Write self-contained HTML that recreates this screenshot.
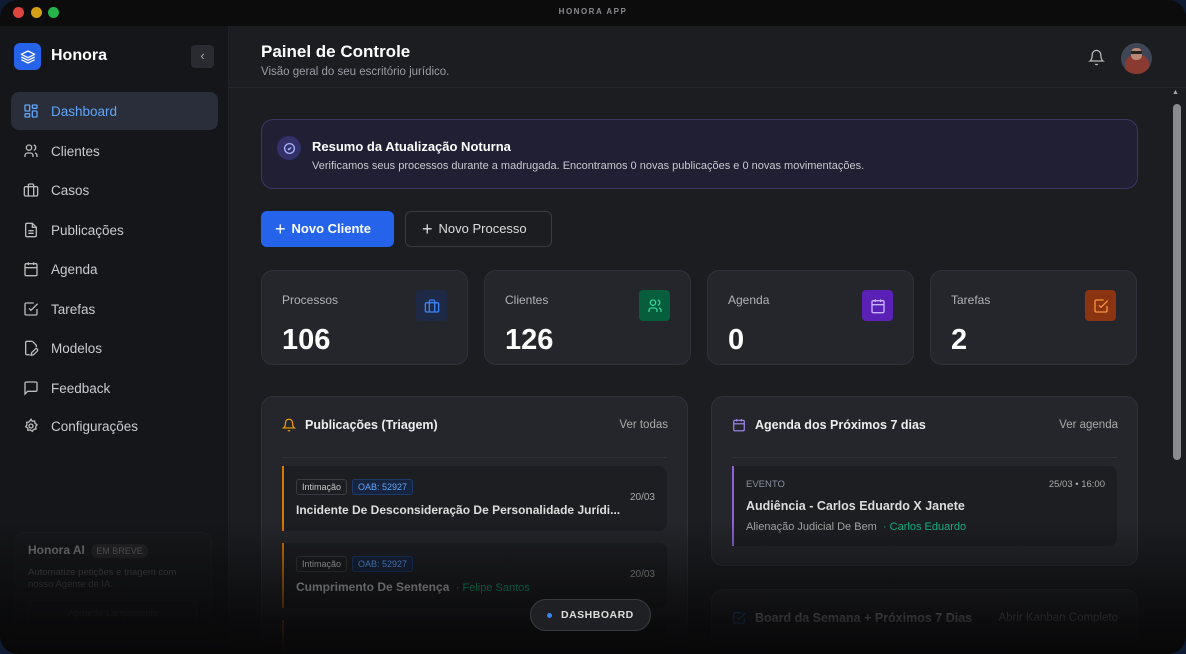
<!DOCTYPE html>
<html><head><meta charset="utf-8">
<style>
*{box-sizing:border-box;margin:0;padding:0}
html,body{width:1186px;height:654px;overflow:hidden;background:#0f1a33;font-family:"Liberation Sans",sans-serif;color:#e5e7eb}
.win{position:absolute;left:0;top:0;width:1186px;height:654px;border-radius:18px;overflow:hidden;background:#1c1d21}
.title{position:absolute;left:0;top:0;right:0;height:26px;background:#0c0c0d;text-align:center;font-size:8px;letter-spacing:1.5px;color:#8a8a8f;line-height:24px;font-weight:bold}
.dot{position:absolute;top:7px;width:11px;height:11px;border-radius:50%}
.side{position:absolute;left:0;top:26px;width:229px;bottom:0;background:#151619;border-right:1px solid #202126}
.logo{position:absolute;left:14px;top:17px;width:27px;height:27px;border-radius:6px;background:#2563eb;display:flex;align-items:center;justify-content:center}
.brand{position:absolute;left:51px;top:21px;font-size:16px;font-weight:bold;color:#fff}
.coll{position:absolute;left:191px;top:19px;width:23px;height:23px;border-radius:4px;background:#2a2b30;color:#aaa;font-size:13px;text-align:center;line-height:22px}
.nav{position:absolute;left:11px;width:207px;height:38px;border-radius:8px;display:flex;align-items:center;padding-left:12px;font-size:13.5px;color:#c9cbd0}
.nav svg{margin-right:12px}
.nav.act{background:#2a2e3a;color:#60a5fa}
.ai{position:absolute;left:14px;top:506px;width:198px;height:120px;border-radius:10px;background:#1a1b1e;border:1px solid #222;padding:10px 13px;opacity:.5}
.main{position:absolute;left:229px;top:26px;right:0;bottom:0}
.hdr{position:absolute;left:0;right:0;top:0;height:62px;border-bottom:1px solid #26272c}
h1{position:absolute;left:32px;top:16px;font-size:17px;color:#fff}
.sub{position:absolute;left:32px;top:40px;font-size:11.5px;color:#9a9ca3}
.card{position:absolute;background:#25262b;border:1px solid #30313a;border-radius:12px}
.stat .lb{position:absolute;left:20px;top:22px;font-size:12px;color:#b0b2b8}
.stat .num{position:absolute;left:20px;top:53px;font-size:29px;font-weight:bold;color:#fff}
.stat .ic{position:absolute;right:20px;top:19px;width:31px;height:31px;border-radius:4px;display:flex;align-items:center;justify-content:center}
.pub{position:absolute;left:20px;right:20px;height:65px;background:#1d1e22;border-left:2px solid #d97706;border-radius:0 8px 8px 0}
.tag{display:inline-block;font-size:9px;padding:2px 5px;border-radius:3px;border:1px solid #3a3b40;color:#c5c5c5;margin-right:5px}
.tag.b{border-color:#1e3a6a;background:#16243f;color:#60a5fa}
.fade{position:absolute;left:0;right:0;top:520px;bottom:0;background:linear-gradient(to bottom,rgba(8,8,9,0),rgba(8,8,9,.85) 75%,#080809);pointer-events:none}
</style></head><body>
<div class="win">
<div class="title">HONORA APP
<span class="dot" style="left:13px;background:#e0443e"></span><span class="dot" style="left:31px;background:#d4a017"></span><span class="dot" style="left:48px;background:#26b34a"></span></div>

<div class="side">
<div class="logo"><svg width="16" height="16" viewBox="0 0 24 24" fill="none" stroke="#fff" stroke-width="2" stroke-linejoin="round"><path d="M12 3 2 8l10 5 10-5z"/><path d="M2 12l10 5 10-5"/><path d="M2 16l10 5 10-5"/></svg></div>
<div class="brand">Honora</div>
<div class="coll">‹</div>
<div class="nav act" style="top:66px"><svg width="16" height="16" viewBox="0 0 24 24" fill="none" stroke="#60a5fa" stroke-width="2"><rect x="3" y="3" width="7" height="9" rx="1"/><rect x="14" y="3" width="7" height="5" rx="1"/><rect x="14" y="12" width="7" height="9" rx="1"/><rect x="3" y="16" width="7" height="5" rx="1"/></svg>Dashboard</div>
<div class="nav" style="top:106px"><svg width="16" height="16" viewBox="0 0 24 24" fill="none" stroke="#bbb" stroke-width="2"><circle cx="9" cy="7" r="4"/><path d="M3 21v-2a4 4 0 0 1 4-4h4a4 4 0 0 1 4 4v2M16 3.1a4 4 0 0 1 0 7.8M21 21v-2a4 4 0 0 0-3-3.9"/></svg>Clientes</div>
<div class="nav" style="top:145px"><svg width="16" height="16" viewBox="0 0 24 24" fill="none" stroke="#bbb" stroke-width="2"><rect x="2" y="7" width="20" height="14" rx="2"/><path d="M16 21V5a2 2 0 0 0-2-2h-4a2 2 0 0 0-2 2v16"/></svg>Casos</div>
<div class="nav" style="top:185px"><svg width="16" height="16" viewBox="0 0 24 24" fill="none" stroke="#bbb" stroke-width="2"><path d="M14 2H6a2 2 0 0 0-2 2v16a2 2 0 0 0 2 2h12a2 2 0 0 0 2-2V8z"/><path d="M14 2v6h6M16 13H8M16 17H8"/></svg>Publicações</div>
<div class="nav" style="top:224px"><svg width="16" height="16" viewBox="0 0 24 24" fill="none" stroke="#bbb" stroke-width="2"><rect x="3" y="4" width="18" height="18" rx="2"/><path d="M16 2v4M8 2v4M3 10h18"/></svg>Agenda</div>
<div class="nav" style="top:264px"><svg width="16" height="16" viewBox="0 0 24 24" fill="none" stroke="#bbb" stroke-width="2"><path d="M9 11l3 3L22 4"/><path d="M21 12v7a2 2 0 0 1-2 2H5a2 2 0 0 1-2-2V5a2 2 0 0 1 2-2h11"/></svg>Tarefas</div>
<div class="nav" style="top:303px"><svg width="16" height="16" viewBox="0 0 24 24" fill="none" stroke="#bbb" stroke-width="2"><path d="M14 2H6a2 2 0 0 0-2 2v16a2 2 0 0 0 2 2h4M14 2l6 6v3"/><path d="M18.4 13.6a2 2 0 0 1 3 3L16 22l-4 1 1-4z"/></svg>Modelos</div>
<div class="nav" style="top:343px"><svg width="16" height="16" viewBox="0 0 24 24" fill="none" stroke="#bbb" stroke-width="2"><path d="M21 15a2 2 0 0 1-2 2H7l-4 4V5a2 2 0 0 1 2-2h14a2 2 0 0 1 2 2z"/></svg>Feedback</div>
<div class="nav" style="top:381px"><svg width="16" height="16" viewBox="0 0 24 24" fill="none" stroke="#bbb" stroke-width="2"><circle cx="12" cy="12" r="3"/><path d="M12 2l2 3 3.5-.5.5 3.5 3 2-2 3 .5 3.5-3.5.5-2 3-3-2-3.5.5-.5-3.5-3-2 2-3-.5-3.5 3.5-.5z"/></svg>Configurações</div>
<div class="ai"><div style="font-size:12px;font-weight:bold;color:#ddd">Honora AI <span style="font-size:9px;font-weight:normal;background:#333;border-radius:8px;padding:2px 5px;color:#aaa;margin-left:3px">EM BREVE</span></div>
<div style="font-size:9.5px;color:#888;margin-top:10px;line-height:12px">Automatize petições e triagem com nosso Agente de IA.</div>
<div style="margin-top:9px;height:27px;border:1px solid #2a2a2e;border-radius:6px;background:#1f1f22;text-align:center;font-size:9.5px;color:#666;line-height:26px">Aguarde Lançamento</div></div>
</div>

<div class="main">
<div class="hdr"><h1>Painel de Controle</h1><div class="sub">Visão geral do seu escritório jurídico.</div>
<svg style="position:absolute;left:859px;top:23px" width="17" height="17" viewBox="0 0 24 24" fill="none" stroke="#bbb" stroke-width="1.8"><path d="M6 8a6 6 0 0 1 12 0c0 7 3 9 3 9H3s3-2 3-9M10.3 21a1.9 1.9 0 0 0 3.4 0"/></svg>
<div style="position:absolute;left:892px;top:17px;width:31px;height:31px;border-radius:50%;overflow:hidden;background:#3f4656"><div style="position:absolute;left:4px;top:12px;width:24px;height:22px;border-radius:40%;background:#8b3a32"></div><div style="position:absolute;left:10px;top:5px;width:11px;height:12px;border-radius:40%;background:#b98773"></div><div style="position:absolute;left:10px;top:8px;width:11px;height:3px;background:#222"></div></div></div>

<div style="position:absolute;right:5px;top:63px;width:9px;height:10px;color:#aaa;font-size:7px">▲</div>
<div style="position:absolute;right:5px;top:78px;width:8px;height:356px;border-radius:4px;background:#8a8a8f"></div>

<div class="card" style="left:32px;top:93px;width:877px;height:70px;background:#211f33;border-color:#3a3760">
<div style="position:absolute;left:15px;top:16px;width:24px;height:24px;border-radius:50%;background:#34316a;display:flex;align-items:center;justify-content:center"><svg width="13" height="13" viewBox="0 0 24 24" fill="none" stroke="#a5b4fc" stroke-width="2.5"><circle cx="12" cy="12" r="9"/><path d="M9 12l2 2 4-4"/></svg></div>
<div style="position:absolute;left:50px;top:19px;font-size:13px;font-weight:bold;color:#fff">Resumo da Atualização Noturna</div>
<div style="position:absolute;left:50px;top:40px;font-size:11px;color:#c8c8d0">Verificamos seus processos durante a madrugada. Encontramos 0 novas publicações e 0 novas movimentações.</div></div>

<div style="position:absolute;left:32px;top:185px;width:133px;height:36px;border-radius:6px;background:#2563eb;color:#fff;font-size:13px;font-weight:bold;line-height:36px;padding-left:14px"><span style="font-size:18px;font-weight:normal;vertical-align:-2px;margin-right:6px">+</span>Novo Cliente</div>
<div style="position:absolute;left:176px;top:185px;width:147px;height:36px;border-radius:6px;background:#1c1d21;border:1px solid #3a3b40;color:#ddd;font-size:13px;line-height:34px;padding-left:16px"><span style="font-size:18px;vertical-align:-2px;margin-right:6px">+</span>Novo Processo</div>

<div class="card stat" style="left:32px;top:244px;width:207px;height:95px"><div class="lb">Processos</div><div class="num">106</div><div class="ic" style="background:#1e2a45"><svg width="16" height="16" viewBox="0 0 24 24" fill="none" stroke="#3b82f6" stroke-width="2"><rect x="2" y="7" width="20" height="14" rx="2"/><path d="M16 21V5a2 2 0 0 0-2-2h-4a2 2 0 0 0-2 2v16"/></svg></div></div>
<div class="card stat" style="left:255px;top:244px;width:207px;height:95px"><div class="lb">Clientes</div><div class="num">126</div><div class="ic" style="background:#075e3c"><svg width="16" height="16" viewBox="0 0 24 24" fill="none" stroke="#34d399" stroke-width="2"><circle cx="9" cy="7" r="4"/><path d="M3 21v-2a4 4 0 0 1 4-4h4a4 4 0 0 1 4 4v2M16 3.1a4 4 0 0 1 0 7.8M21 21v-2a4 4 0 0 0-3-3.9"/></svg></div></div>
<div class="card stat" style="left:478px;top:244px;width:207px;height:95px"><div class="lb">Agenda</div><div class="num">0</div><div class="ic" style="background:#5b21b6"><svg width="16" height="16" viewBox="0 0 24 24" fill="none" stroke="#c4b5fd" stroke-width="2"><rect x="3" y="4" width="18" height="18" rx="2"/><path d="M16 2v4M8 2v4M3 10h18"/></svg></div></div>
<div class="card stat" style="left:701px;top:244px;width:207px;height:95px"><div class="lb">Tarefas</div><div class="num">2</div><div class="ic" style="background:#8a3412"><svg width="16" height="16" viewBox="0 0 24 24" fill="none" stroke="#fb923c" stroke-width="2"><path d="M9 11l3 3L22 4"/><path d="M21 12v7a2 2 0 0 1-2 2H5a2 2 0 0 1-2-2V5a2 2 0 0 1 2-2h11"/></svg></div></div>

<div class="card" style="left:32px;top:370px;width:427px;height:300px">
<svg style="position:absolute;left:20px;top:21px" width="14" height="14" viewBox="0 0 24 24" fill="none" stroke="#f59e0b" stroke-width="2"><path d="M6 8a6 6 0 0 1 12 0c0 7 3 9 3 9H3s3-2 3-9M10.3 21a1.9 1.9 0 0 0 3.4 0"/></svg>
<div style="position:absolute;left:43px;top:21px;font-size:12.5px;font-weight:bold;color:#eee">Publicações (Triagem)</div>
<div style="position:absolute;right:19px;top:22px;font-size:11.5px;color:#aaa">Ver todas</div>
<div style="position:absolute;left:20px;right:20px;top:60px;height:1px;background:#303138"></div>
<div class="pub" style="top:69px"><div style="position:absolute;left:12px;top:11px"><span class="tag">Intimação</span><span class="tag b">OAB: 52927</span></div><div style="position:absolute;left:12px;top:37px;font-size:12px;font-weight:bold;color:#ddd">Incidente De Desconsideração De Personalidade Jurídi...</div><div style="position:absolute;right:12px;top:26px;font-size:10px;color:#aaa">20/03</div></div>
<div class="pub" style="top:146px"><div style="position:absolute;left:12px;top:11px"><span class="tag">Intimação</span><span class="tag b">OAB: 52927</span></div><div style="position:absolute;left:12px;top:37px;font-size:12px;font-weight:bold;color:#ddd">Cumprimento De Sentença <span style="font-weight:normal;color:#10b981;font-size:11px">&nbsp;· Felipe Santos</span></div><div style="position:absolute;right:12px;top:26px;font-size:10px;color:#aaa">20/03</div></div>
<div class="pub" style="top:223px"></div>
</div>

<div class="card" style="left:482px;top:370px;width:427px;height:170px">
<svg style="position:absolute;left:20px;top:21px" width="14" height="14" viewBox="0 0 24 24" fill="none" stroke="#a78bfa" stroke-width="2"><rect x="3" y="4" width="18" height="18" rx="2"/><path d="M16 2v4M8 2v4M3 10h18"/></svg>
<div style="position:absolute;left:43px;top:21px;font-size:12.5px;font-weight:bold;color:#eee">Agenda dos Próximos 7 dias</div>
<div style="position:absolute;right:19px;top:22px;font-size:11.5px;color:#aaa">Ver agenda</div>
<div style="position:absolute;left:20px;right:20px;top:60px;height:1px;background:#303138"></div>
<div class="pub" style="top:69px;height:80px;border-left-color:#9061d8"><div style="position:absolute;left:12px;top:13px;font-size:9.5px;color:#8a8fa0">EVENTO</div><div style="position:absolute;right:12px;top:13px;font-size:9.5px;color:#aaa">25/03 • 16:00</div><div style="position:absolute;left:12px;top:33px;font-size:12.5px;font-weight:bold;color:#ddd">Audiência - Carlos Eduardo X Janete</div><div style="position:absolute;left:12px;top:55px;font-size:11px;color:#aaa">Alienação Judicial De Bem <span style="color:#10b981">&nbsp;· Carlos Eduardo</span></div></div>
</div>

<div class="card" style="left:482px;top:563px;width:427px;height:100px">
<svg style="position:absolute;left:20px;top:21px" width="14" height="14" viewBox="0 0 24 24" fill="none" stroke="#3b82f6" stroke-width="2"><path d="M9 11l3 3L22 4"/><path d="M21 12v7a2 2 0 0 1-2 2H5a2 2 0 0 1-2-2V5a2 2 0 0 1 2-2h11"/></svg>
<div style="position:absolute;left:43px;top:21px;font-size:12.5px;font-weight:bold;color:#eee">Board da Semana + Próximos 7 Dias</div>
<div style="position:absolute;right:19px;top:22px;font-size:11.5px;color:#aaa">Abrir Kanban Completo</div></div>
</div>
<div class="fade"></div>
<div style="position:absolute;left:530px;top:599px;width:121px;height:32px;border-radius:16px;background:#1f2023;border:1px solid #3a3b40;font-size:10.5px;font-weight:bold;letter-spacing:.5px;color:#ddd;line-height:30px;padding-left:30px"><span style="position:absolute;left:16px;top:13px;width:5px;height:5px;border-radius:50%;background:#3b82f6"></span>DASHBOARD</div>
</div>
</body></html>
